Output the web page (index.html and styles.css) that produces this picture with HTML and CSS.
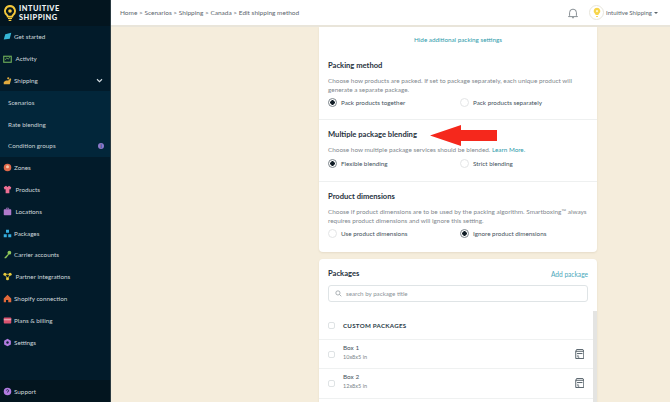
FILE: index.html
```html
<!DOCTYPE html>
<html lang="en">
<head>
<meta charset="utf-8">
<title>Edit shipping method</title>
<link rel="stylesheet" href="styles.css">
</head>
<body>
<div class="app">
  <aside class="sidebar">
    <div class="brand">
      <svg class="brand-icon" viewBox="0 0 18 24"><path d="M9 1.500a7.500 7.500 0 0 0-4.600 13.400c.9.800 1.300 1.500 1.300 2.600h6.600c0-1.100.4-1.800 1.300-2.600A7.500 7.500 0 0 0 9 1.500Z" fill="none" stroke="#f4c93c" stroke-width="2.800"/><circle cx="9" cy="9" r="2.700" fill="#f4c93c"/><path d="M6 20h6M7 23h4" stroke="#f4c93c" stroke-width="2"/></svg>
      <div class="brand-name">INTUITIVE<br>SHIPPING</div>
    </div>
    <nav class="nav">
      <div class="nav-item"><svg class="ico" viewBox="0 0 12 12"><path d="M1 10 3 3l8-2-2 8Z" fill="#35b6d6"/></svg>Get started</div>
      <div class="nav-item"><svg class="ico wide" viewBox="0 0 12 12"><rect x="1" y="3" width="10" height="8" fill="none" stroke="#6fae5a" stroke-width="1.500"/><path d="M3 8l2-3 2 2 2-3" fill="none" stroke="#6fae5a"/></svg>Activity</div>
      <div class="nav-item"><svg class="ico" viewBox="0 0 12 12"><path d="M1 11V8l3-2h3l3-3 1 1-2 7Z" fill="#e0aa3e"/><circle cx="7" cy="3" r="1.500" fill="#e0aa3e"/></svg>Shipping<svg class="chev" viewBox="0 0 8 6"><path d="M1 1.500 4 4.500 7 1.500" fill="none" stroke="#d5dde2" stroke-width="1.300"/></svg></div>
      <div class="sub-group">
        <div class="nav-item sub">Scenarios</div>
        <div class="nav-item sub">Rate blending</div>
        <div class="nav-item sub">Condition groups<span class="info">i</span></div>
      </div>
      <div class="nav-item"><svg class="ico" viewBox="0 0 12 12"><circle cx="6" cy="6" r="5" fill="#e0694a"/><circle cx="6" cy="5" r="2" fill="#f3c7a8"/></svg>Zones</div>
      <div class="nav-item"><svg class="ico wide" viewBox="0 0 12 12"><path d="M4 1 1 3l1 3 1.500-.500V11h5V5.500L10 6l1-3-3-2-2 1.500Z" fill="#ee6f93"/></svg>Products</div>
      <div class="nav-item"><svg class="ico wide" viewBox="0 0 12 12"><path d="M4.500 3V1.500h3V3" fill="none" stroke="#b07acb"/><rect x="1" y="3" width="10" height="8" rx="1" fill="#b07acb"/></svg>Locations</div>
      <div class="nav-item"><svg class="ico" viewBox="0 0 12 12"><path d="M4 1h4v4H4ZM1 7h4v4H1ZM7 7h4v4H7Z" fill="#35aee0"/></svg>Packages</div>
      <div class="nav-item"><svg class="ico" viewBox="0 0 12 12"><circle cx="8.500" cy="3.500" r="2.500" fill="#8fc85a"/><path d="M7 5 2 10v1h2l4-5Z" fill="#8fc85a"/></svg>Carrier accounts</div>
      <div class="nav-item"><svg class="ico wide" viewBox="0 0 12 12"><path d="M2.500 3h7M2.500 3 6 9M9.500 3 6 9" stroke="#e8cb3c" fill="none"/><circle cx="2.500" cy="3" r="2" fill="#e8cb3c"/><circle cx="9.500" cy="3" r="2" fill="#e8cb3c"/><circle cx="6" cy="9" r="2" fill="#e8cb3c"/></svg>Partner integrations</div>
      <div class="nav-item"><svg class="ico" viewBox="0 0 12 12"><path d="M6 1 1 6v5h3V8h3v3h4V6Z" fill="#e2693a"/></svg>Shopify connection</div>
      <div class="nav-item"><svg class="ico" viewBox="0 0 12 12"><rect x="1" y="2" width="10" height="8" rx="1" fill="#d9536f"/><path d="M1 5h10" stroke="#f3d6dc"/></svg>Plans &amp; billing</div>
      <div class="nav-item"><svg class="ico" viewBox="0 0 12 12"><path d="M6 1 10.500 3.500v5L6 11 1.500 8.500v-5Z" fill="#b27be0"/><circle cx="6" cy="6" r="1.600" fill="#0a2233"/></svg>Settings</div>
    </nav>
    <div class="support"><svg class="ico" viewBox="0 0 12 12"><circle cx="6" cy="6" r="5" fill="#b27be0"/><path d="M4.500 4.800a1.500 1.500 0 1 1 1.500 1.700v.7" fill="none" stroke="#0a2233"/></svg>Support</div>
  </aside>
  <div class="content">
    <header class="topbar">
      <div class="crumbs">Home &gt; Scenarios &gt; Shipping &gt; Canada &gt; Edit shipping method</div>
      <svg class="bell" viewBox="0 0 14 14"><path d="M3 10V6.500a4 4 0 0 1 8 0V10l1.200 1.200H1.800ZM5.800 12.500h2.400" fill="none" stroke="#666f75" stroke-width=".9"/></svg>
      <div class="avatar"><svg viewBox="0 0 12 16"><path d="M6 1a5 5 0 0 0-3 9c.6.500.8 1 .8 1.800h4.400c0-.8.2-1.300.8-1.800A5 5 0 0 0 6 1Z" fill="#f7d54a"/><circle cx="6" cy="6" r="1.700" fill="#fff6c9"/><path d="M4.500 14h3" stroke="#f7d54a" stroke-width="1.400"/></svg></div>
      <div class="account">Intuitive Shipping<span class="caret"></span></div>
    </header>
    <main class="main">
      <section class="card settings">
        <div class="hide-row"><a class="link">Hide additional packing settings</a></div>
        <div class="block first">
          <h2>Packing method</h2>
          <p>Choose how products are packed. If set to package separately, each unique product will generate a separate package.</p>
          <div class="radios">
            <label class="radio on">Pack products together</label>
            <label class="radio">Pack products separately</label>
          </div>
        </div>
        <div class="block blend">
          <h2>Multiple package blending</h2>
          <p>Choose how multiple package services should be blended. <a class="link">Learn More.</a></p>
          <div class="radios">
            <label class="radio on">Flexible blending</label>
            <label class="radio">Strict blending</label>
          </div>
          <svg class="arrow" viewBox="0 0 67 21"><path d="M0 10.500 31 0v5h36v11H31v5Z" fill="#f5281c"/></svg>
        </div>
        <div class="block dims">
          <h2>Product dimensions</h2>
          <p>Choose if product dimensions are to be used by the packing algorithm. Smartboxing™ always requires product dimensions and will ignore this setting.</p>
          <div class="radios">
            <label class="radio">Use product dimensions</label>
            <label class="radio on">Ignore product dimensions</label>
          </div>
        </div>
      </section>
      <section class="card packages">
        <div class="pk-head"><h2>Packages</h2><a class="link add">Add package</a></div>
        <div class="search"><svg viewBox="0 0 10 10"><circle cx="4.200" cy="4.200" r="3" fill="none" stroke="#8b9398"/><path d="m6.500 6.500 2.500 2.500" stroke="#8b9398"/></svg>search by package title</div>
        <div class="list">
          <div class="row head"><span class="check"></span><strong>CUSTOM PACKAGES</strong></div>
          <div class="row"><span class="check"></span><div class="box-text"><div class="box-name">Box 1</div><div class="box-size">10x8x5 in</div></div><svg class="cal" viewBox="0 0 10 11"><path d="M.6 2.500h8.800v8H.6ZM.6 2.500l1-2h6.800l1 2M2 5h6" fill="none" stroke="#34424c" stroke-width=".9"/><path d="M3 6.500v2.500h1.500" fill="none" stroke="#34424c" stroke-width=".8"/></svg></div>
          <div class="row"><span class="check"></span><div class="box-text"><div class="box-name">Box 2</div><div class="box-size">12x8x5 in</div></div><svg class="cal" viewBox="0 0 10 11"><path d="M.6 2.500h8.800v8H.6ZM.6 2.500l1-2h6.800l1 2M2 5h6" fill="none" stroke="#34424c" stroke-width=".9"/><path d="M3 6.500v2.500h1.500" fill="none" stroke="#34424c" stroke-width=".8"/></svg></div>
          <div class="row"></div>
          <span class="scrollbar"></span>
        </div>
      </section>
    </main>
  </div>
</div>
</body>
</html>
```
FILE: styles.css
```css
* { box-sizing: border-box; }
html, body { margin: 0; height: 100%; overflow: hidden; }
body { font-family: Lato, "Liberation Sans", sans-serif; color: #34424c; }
.app { display: flex; width: 670px; height: 402px; overflow: hidden; }

.sidebar { width: 111px; flex: none; display: flex; flex-direction: column; background: #021b2a; border-right: 1px solid #2a3a42; color: #cfd8dc; font-size: 6.300px; }
.brand { height: 26px; flex: none; display: flex; align-items: center; gap: 3px; padding-left: 4px; background: #03151f; }
.brand-icon { width: 12px; height: 18px; }
.brand-name { font-weight: 900; font-size: 7.400px; line-height: 9px; color: #eef2f3; letter-spacing: .5px; }
.nav { flex: 1; }
.nav-item { height: 21.800px; display: flex; align-items: center; padding-left: 3px; white-space: nowrap; }
.ico { width: 9px; height: 9px; margin-right: 2px; flex: none; }
.ico.wide { margin-right: 3.500px; }
.chev { width: 7px; height: 5px; margin-left: auto; margin-right: 7px; }
.sub-group { background: #02263a; }
.nav-item.sub { padding-left: 8px; color: #c7d1d6; }
.info { margin-left: auto; margin-right: 6px; width: 6px; height: 6px; border-radius: 50%; background: #8b78c9; color: #02263a; font-size: 5px; line-height: 6px; text-align: center; }
.support { height: 22px; flex: none; display: flex; align-items: center; padding-left: 3px; background: #03151f; }

.content { flex: 1; min-width: 0; display: flex; flex-direction: column; }
.topbar { height: 27px; flex: none; display: flex; align-items: center; background: #fff; border-bottom: 2px solid #e9e5da; padding-left: 9px; font-size: 6.500px; color: #5c666d; }
.crumbs { flex: 1; }
.bell { width: 12px; height: 12px; margin-right: 10px; }
.avatar { width: 15px; height: 15px; border-radius: 50%; border: 1px solid #e8e6dc; display: flex; align-items: center; justify-content: center; margin-right: 2px; }
.avatar svg { width: 8px; height: 11px; }
.account { margin-right: 12px; font-size: 6px; white-space: nowrap; }
.caret { display: inline-block; margin-left: 2px; vertical-align: middle; border: 2px solid transparent; border-top-color: #5c666d; border-bottom: 0; }

.main { flex: 1; min-height: 0; overflow: hidden; background: #f5eddc; display: flex; flex-direction: column; align-items: flex-start; gap: 7px; padding-left: 208px; }
.card { width: 278px; flex: none; background: #fff; border-radius: 4px; box-shadow: 0 1px 2px rgba(120,100,60,.12); }
.settings { border-radius: 0 0 4px 4px; }
h2 { margin: 0; font-size: 7.600px; font-weight: 700; color: #1f313d; line-height: 11px; }
p { margin: 5px 0 0; font-size: 6.400px; line-height: 9.200px; color: #7f888e; }
.link { color: #2d9bab; font-size: 6.300px; }
.add { font-size: 6.600px; color: #4aa8bb; }
.hide-row { height: 30px; padding-top: 4px; line-height: 9px; text-align: center; }
.block { position: relative; padding: 9px 9px 12px; border-top: 1px solid #eef0f0; }
.block.first { border-top: 0; padding-top: 3px; }
.block.blend { padding-top: 9px; padding-bottom: 13px; }
.block.dims { padding-bottom: 14px; }
.radios { display: grid; grid-template-columns: 132px 1fr; margin-top: 4px; }
.radio { display: flex; align-items: center; gap: 4px; font-size: 6.300px; line-height: 9px; color: #44525c; }
.radio::before { content: ""; width: 7px; height: 7px; border-radius: 50%; border: 1px solid #e3e5e6; background: #fff; }
.radio.on::before { border: 1px solid #7c858b; background: radial-gradient(circle, #111d26 0 2px, #fff 2.500px); }
.arrow { position: absolute; left: 111px; top: 5px; width: 67px; height: 21px; }

.pk-head { display: flex; justify-content: space-between; align-items: center; padding: 9px 9px 6px; }
.search { margin: 0 9px; height: 17px; display: flex; align-items: center; gap: 4px; padding-left: 6px; border: 1px solid #dfe4e6; border-radius: 3px; font-size: 6.200px; color: #8b9398; }
.search svg { width: 7px; height: 7px; }
.list { position: relative; margin-top: 10px; }
.row { height: 29.300px; display: flex; align-items: center; padding: 0 13px 0 9px; border-top: 1px solid #eff1f1; }
.row.head { border-top: 0; height: 27px; }
.check { width: 7px; height: 7px; border: 1px solid #dfe3e5; border-radius: 2px; margin-right: 8px; flex: none; }
.row strong { font-size: 6.200px; letter-spacing: .25px; color: #2a3b47; }
.box-text { flex: 1; padding-bottom: 4px; }
.box-name { font-size: 6.400px; line-height: 9px; color: #44525c; }
.box-size { font-size: 5.500px; line-height: 8px; color: #7a848a; margin-top: 1px; }
.cal { width: 9.500px; height: 10px; }
.scrollbar { position: absolute; right: 0; top: -1px; bottom: 0; width: 4px; background: #e4e4e2; }
```
